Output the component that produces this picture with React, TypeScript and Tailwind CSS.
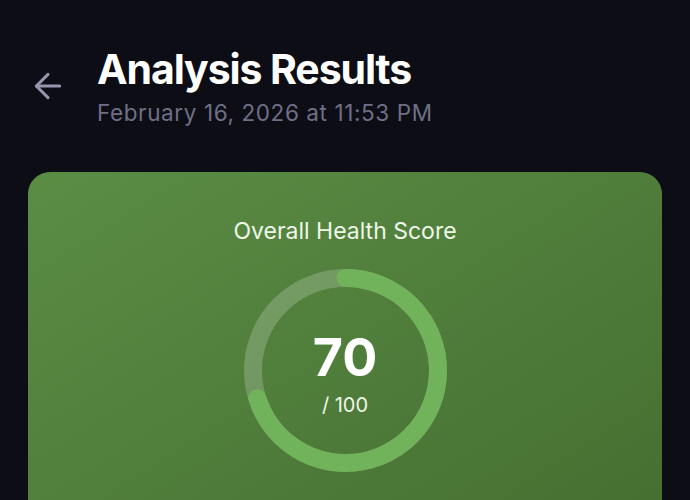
import { ArrowLeft } from 'lucide-react'

function ScoreRing({ score }: { score: number }) {
  const r = 92.5
  const c = 2 * Math.PI * r
  return (
    <div className="relative w-[203px] h-[203px]">
      <svg width="203" height="203" viewBox="0 0 203 203" className="-rotate-90">
        <circle cx="101.5" cy="101.5" r={r} fill="none" stroke="rgba(255,255,255,0.2)" strokeWidth="18" />
        <circle
          cx="101.5"
          cy="101.5"
          r={r}
          fill="none"
          stroke="#71b35a"
          strokeWidth="18"
          strokeLinecap="round"
          strokeDasharray={c}
          strokeDashoffset={c * (1 - score / 100)}
        />
      </svg>
      <div className="absolute inset-0 flex flex-col items-center pt-[63px]">
        <span className="text-[52px] leading-none font-bold text-white">{score}</span>
        <span className="text-[20px] leading-none text-[#eef7e8] mt-[11px]">/ 100</span>
      </div>
    </div>
  )
}

export default function App() {
  return (
    <div className="w-[690px] h-[500px] overflow-hidden bg-[#0c0d15] font-['Inter',sans-serif]">
      <div className="flex items-start pt-[45px] pl-[28px]">
        <button className="mt-[21px] text-[#9796ae]">
          <ArrowLeft className="w-[40px] h-[40px]" strokeWidth={1.8} />
        </button>
        <div className="ml-[29px]">
          <h1 className="text-[41px] leading-[48px] font-bold text-white tracking-[-1.1px]">Analysis Results</h1>
          <p className="mt-[6px] text-[22.5px] leading-[28px] text-[#6f6f86] tracking-[0.6px]">February 16, 2026 at 11:53 PM</p>
        </div>
      </div>
      <div className="mx-[28px] mt-[45px] rounded-[22px] bg-gradient-to-br from-[#5b8d45] to-[#446d30] h-[400px] flex flex-col items-center pt-[45px]">
        <h2 className="text-[23px] leading-[28px] text-[#eef7e8]">Overall Health Score</h2>
        <div className="mt-[24px]">
          <ScoreRing score={70} />
        </div>
      </div>
    </div>
  )
}
